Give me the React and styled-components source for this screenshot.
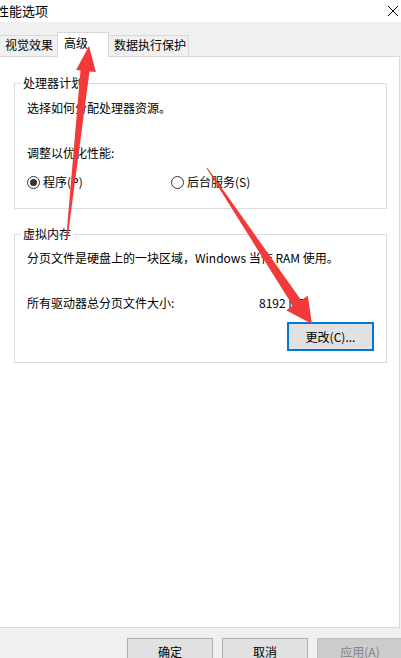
import React from 'react';
import styled, { createGlobalStyle } from 'styled-components';

const GlobalStyle = createGlobalStyle`
  html, body {
    margin: 0;
    padding: 0;
    background: #f0f0f0;
    overflow: hidden;
  }
`;

const Window = styled.div`
  position: relative;
  width: 401px;
  height: 658px;
  overflow: hidden;
  background: #f0f0f0;
  display: flex;
  flex-direction: column;
  font-family: "Noto Sans CJK SC", "Noto Sans", sans-serif;
  font-size: 12px;
  color: #000;
`;

const TitleBar = styled.div`
  height: 22px;
  flex: none;
  background: #fff;
  display: flex;
  align-items: center;
  justify-content: space-between;
  padding-right: 2px;
`;

const Title = styled.span`
  font-size: 13px;
  line-height: 20px;
  margin-left: -4px;
`;

const TabStrip = styled.div`
  height: 34px;
  flex: none;
  display: flex;
  align-items: flex-end;
  margin-left: -1px;
  position: relative;
  z-index: 1;
`;

const Tab = styled.div`
  box-sizing: border-box;
  width: ${p => p.$width}px;
  height: ${p => (p.$active ? 25 : 21)}px;
  margin-bottom: ${p => (p.$active ? -1 : 0)}px;
  padding: ${p => (p.$active ? '1px 0 0 6px' : '0 0 0 5px')};
  background: ${p => (p.$active ? '#fff' : '#f0f0f0')};
  border: 1px solid #d9d9d9;
  border-bottom: none;
  border-left-width: ${p => (p.$noLeft ? 0 : 1)}px;
  border-right-width: ${p => (p.$noRight ? 0 : 1)}px;
  line-height: 18px;
  white-space: nowrap;
`;

const Panel = styled.div`
  box-sizing: border-box;
  height: 572px;
  width: 401px;
  flex: none;
  margin-left: -1px;
  background: #fff;
  border: 1px solid #d9d9d9;
  padding: 18px 0 0 14px;
  display: flex;
  flex-direction: column;
  gap: 17px;
`;

const Group = styled.fieldset`
  box-sizing: border-box;
  width: 373px;
  margin: 0;
  padding: ${p => p.$padding};
  border: 1px solid #dcdcdc;
  min-inline-size: 0;
`;

const Legend = styled.legend`
  padding: 0 2px;
  margin-left: -6px;
  line-height: 16px;
`;

const Line = styled.div`
  line-height: 16px;
  white-space: nowrap;
  margin-top: ${p => p.$gap || 0}px;
`;

const RadioRow = styled.div`
  display: grid;
  grid-template-columns: 144px auto;
  margin-top: 13px;
  line-height: 16px;
`;

const RadioLabel = styled.label`
  display: flex;
  align-items: center;
  gap: 3px;
  white-space: nowrap;
`;

const RadioDot = styled.span`
  box-sizing: border-box;
  width: 13px;
  height: 13px;
  border: 1px solid #333;
  border-radius: 50%;
  display: flex;
  align-items: center;
  justify-content: center;

  &::after {
    content: '';
    width: 7px;
    height: 7px;
    border-radius: 50%;
    background: ${p => (p.$checked ? '#333' : 'transparent')};
  }
`;

const SizeRow = styled.div`
  display: grid;
  grid-template-columns: 232px auto;
  line-height: 16px;
  margin-top: 29px;
`;

const ButtonRow = styled.div`
  display: flex;
  justify-content: flex-end;
  margin-top: 11px;
`;

const Button = styled.button`
  box-sizing: border-box;
  width: ${p => p.$width || 86}px;
  height: ${p => p.$height || 26}px;
  padding: 0;
  font: inherit;
  font-size: 12px;
  color: ${p => (p.$disabled ? '#838383' : '#000')};
  background: ${p => (p.$disabled ? '#cccccc' : '#e1e1e1')};
  border: ${p => (p.$focused ? '2px solid #0078d7' : `1px solid ${p.$disabled ? '#bfbfbf' : '#adadad'}`)};
  border-radius: 0;
`;

const Footer = styled.div`
  flex: none;
  display: flex;
  justify-content: flex-end;
  gap: 9px;
  padding-top: 10px;
  margin-right: -2px;
`;

const Annotation = styled.svg`
  position: absolute;
  left: 0;
  top: 0;
  width: 401px;
  height: 658px;
  pointer-events: none;
  z-index: 5;
`;

function CloseIcon() {
  return (
    <svg width="12" height="12" viewBox="0 0 12 12">
      <path d="M1 1 L11 11 M11 1 L1 11" stroke="#000" strokeWidth="1" fill="none" />
    </svg>
  );
}

export default function App() {
  return (
    <>
      <GlobalStyle />
      <Window>
        <TitleBar>
          <Title>性能选项</Title>
          <CloseIcon />
        </TitleBar>

        <TabStrip>
          <Tab $width={58} $noRight>视觉效果</Tab>
          <Tab $width={52} $active>高级</Tab>
          <Tab $width={80} $noLeft>数据执行保护</Tab>
        </TabStrip>

        <Panel>
          <Group $padding="9px 12px 18px 12px">
            <Legend>处理器计划</Legend>
            <Line>选择如何分配处理器资源。</Line>
            <Line $gap={29}>调整以优化性能:</Line>
            <RadioRow>
              <RadioLabel>
                <RadioDot $checked />
                程序(P)
              </RadioLabel>
              <RadioLabel>
                <RadioDot />
                后台服务(S)
              </RadioLabel>
            </RadioRow>
          </Group>

          <Group $padding="8px 12px 11px 12px">
            <Legend>虚拟内存</Legend>
            <Line>分页文件是硬盘上的一块区域，Windows 当作 RAM 使用。</Line>
            <SizeRow>
              <span>所有驱动器总分页文件大小:</span>
              <span>8192 MB</span>
            </SizeRow>
            <ButtonRow>
              <Button $width={87} $height={29} $focused>更改(C)...</Button>
            </ButtonRow>
          </Group>
        </Panel>

        <Footer>
          <Button>确定</Button>
          <Button>取消</Button>
          <Button $disabled>应用(A)</Button>
        </Footer>

        <Annotation viewBox="0 0 401 658">
          <polygon
            fill="#f33a3a"
            points="89,46 95.9,72.1 89.5,71.5 67.7,237.1 66.3,236.9 80.5,70.5 76.1,69.9"
          />
          <polygon
            fill="#f33a3a"
            points="312,324 307.8,295.8 301.2,300.2 207.4,167.7 206.6,168.3 292.8,305.8 286.2,310.2"
          />
        </Annotation>
      </Window>
    </>
  );
}
